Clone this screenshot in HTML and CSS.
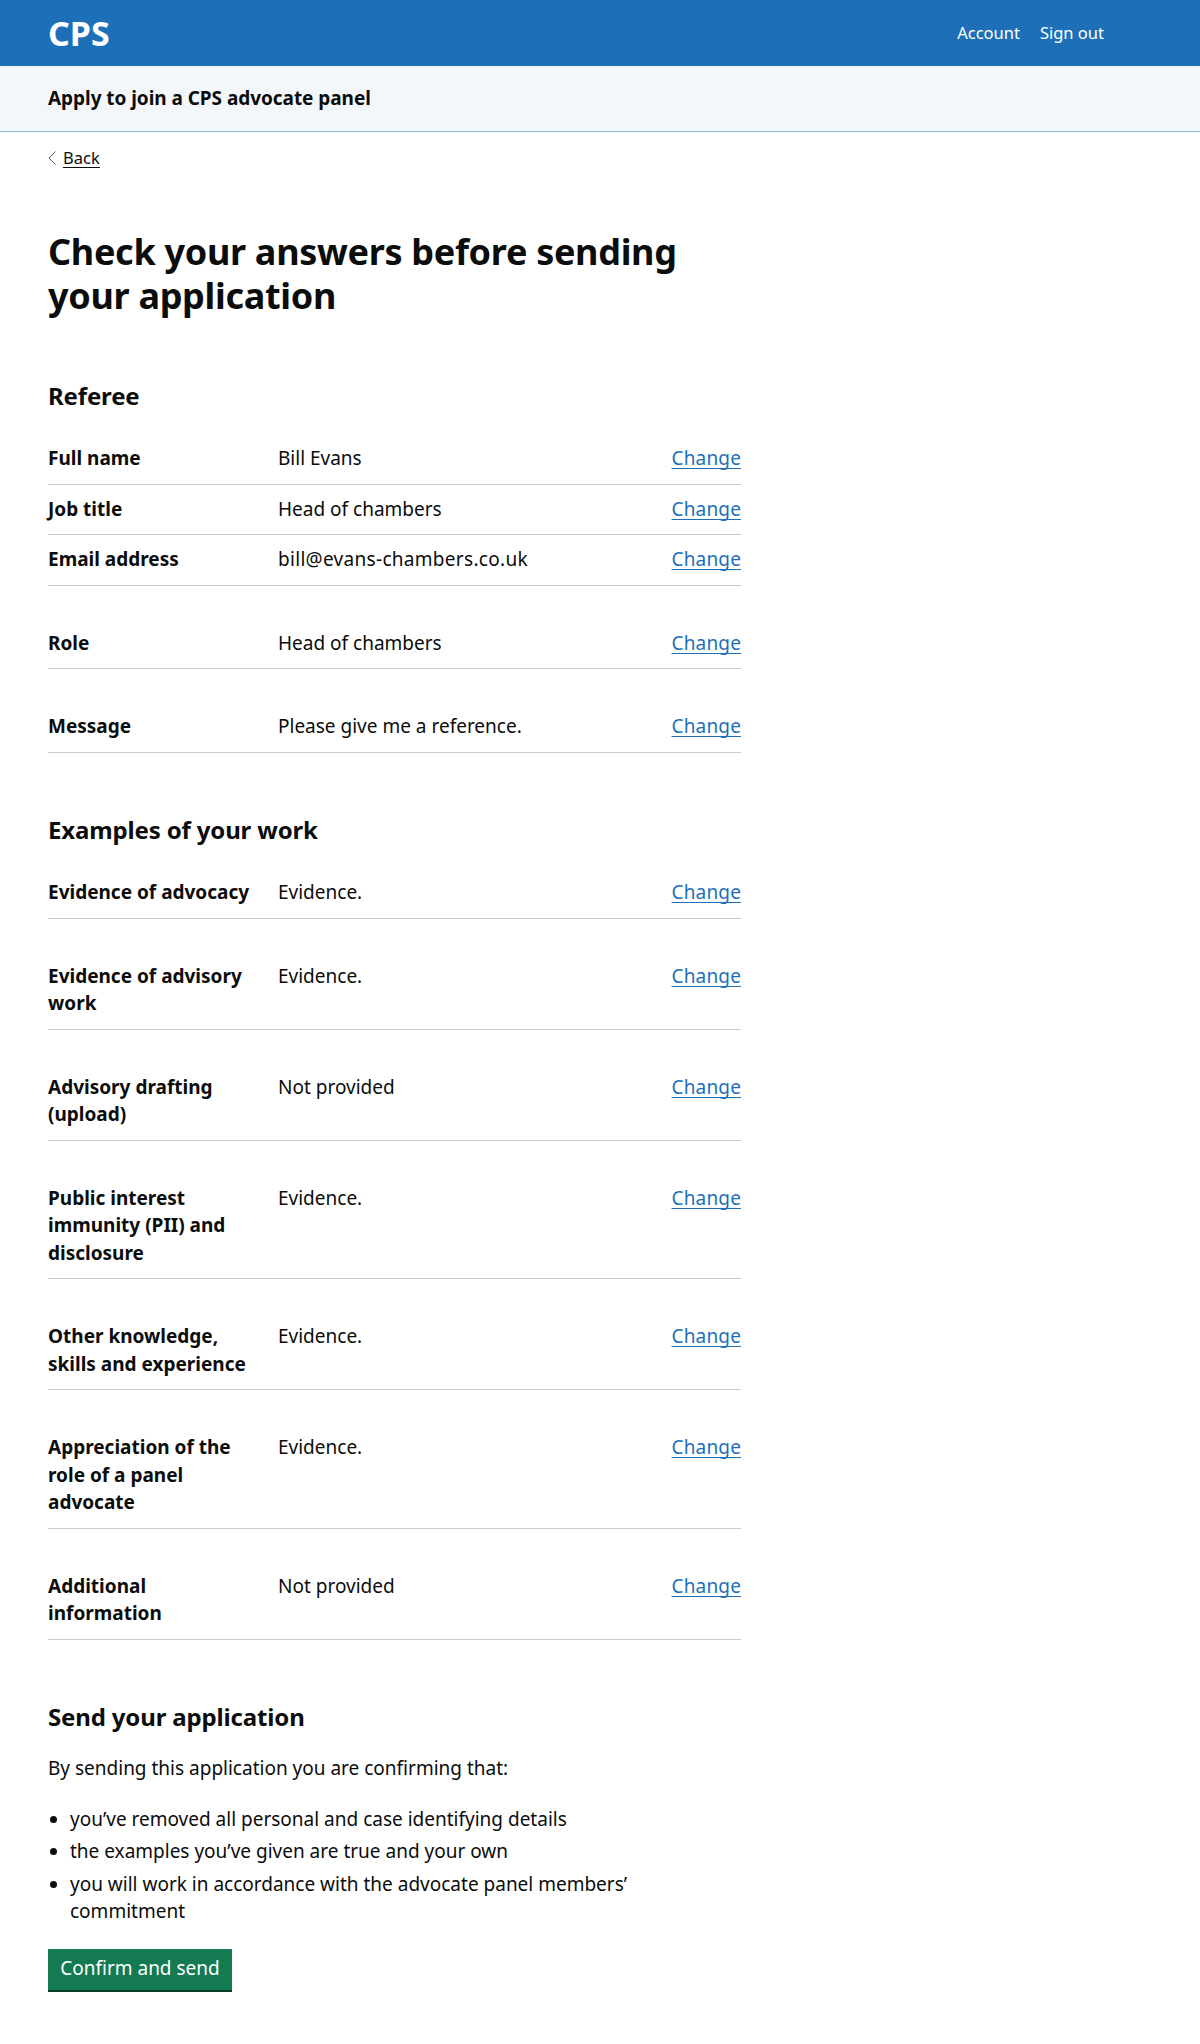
FILE: index.html
```html
<!DOCTYPE html>
<html lang="en">
<head>
<meta charset="utf-8">
<title>Check your answers</title>
<link rel="stylesheet" href="styles.css">
</head>
<body>
<header class="topbar">
  <a class="logo" href="#">CPS</a>
  <nav class="topnav"><a href="#">Account</a><a href="#">Sign out</a></nav>
</header>
<div class="service"><span>Apply to join a CPS advocate panel</span></div>
<main class="wrap">
  <a class="back" href="#"><svg width="8" height="14" viewBox="0 0 8 14"><path d="M7.5.5 1 7l6.500 6.500" fill="none" stroke="#505a5f" stroke-width="1"/></svg><span>Back</span></a>
  <h1>Check your answers before sending your application</h1>
  <h2>Referee</h2>
  <dl class="list mb">
    <div class="row"><dt>Full name</dt><dd>Bill Evans</dd><a href="#">Change</a></div>
    <div class="row"><dt>Job title</dt><dd>Head of chambers</dd><a href="#">Change</a></div>
    <div class="row"><dt>Email address</dt><dd class="email">bill@evans-chambers.co.uk</dd><a href="#">Change</a></div>
  </dl>
  <dl class="list mb">
    <div class="row"><dt>Role</dt><dd>Head of chambers</dd><a href="#">Change</a></div>
  </dl>
  <dl class="list">
    <div class="row"><dt>Message</dt><dd>Please give me a reference.</dd><a href="#">Change</a></div>
  </dl>
  <h2>Examples of your work</h2>
  <dl class="list">
    <div class="row gap"><dt>Evidence of advocacy</dt><dd>Evidence.</dd><a href="#">Change</a></div>
    <div class="row gap"><dt>Evidence of advisory work</dt><dd>Evidence.</dd><a href="#">Change</a></div>
    <div class="row gap"><dt>Advisory drafting (upload)</dt><dd>Not provided</dd><a href="#">Change</a></div>
    <div class="row gap"><dt>Public interest immunity (PII) and disclosure</dt><dd>Evidence.</dd><a href="#">Change</a></div>
    <div class="row gap"><dt>Other knowledge, skills and experience</dt><dd>Evidence.</dd><a href="#">Change</a></div>
    <div class="row gap"><dt>Appreciation of the role of a panel advocate</dt><dd>Evidence.</dd><a href="#">Change</a></div>
    <div class="row gap"><dt>Additional information</dt><dd>Not provided</dd><a href="#">Change</a></div>
  </dl>
  <h2>Send your application</h2>
  <p>By sending this application you are confirming that:</p>
  <ul>
    <li>you’ve removed all personal and case identifying details</li>
    <li>the examples you’ve given are true and your own</li>
    <li>you will work in accordance with the advocate panel members’ commitment</li>
  </ul>
  <button class="btn">Confirm and send</button>
</main>
</body>
</html>
```
FILE: styles.css
```css
* { box-sizing: border-box; }
html, body { margin: 0; padding: 0; }
body { font-family: "Noto Sans", sans-serif; color: #0b0c0c; font-size: 19px; line-height: 27.5px; background: #fff; }
a { text-decoration-thickness: 1px; text-underline-offset: 3px; text-decoration-skip-ink: none; }
.topbar { height: 66px; background: #1d70b8; display: flex; justify-content: space-between; align-items: center; padding: 0 96px 0 48px; }
.logo { color: #fff; font-size: 34px; line-height: 40px; font-weight: 700; text-decoration: none; }
.topnav { display: flex; gap: 20px; }
.topnav a { color: #fff; font-size: 16.5px; text-decoration: none; }
.service { height: 66px; background: #f3f7fa; border-bottom: 1px solid #8eb8dc; padding: 0 48px; display: flex; align-items: center; font-weight: 700; font-size: 19px; letter-spacing: -0.05px; }
.wrap { width: 741px; padding-left: 48px; }
.back { display: inline-flex; align-items: center; gap: 7px; margin-top: 16px; color: #0b0c0c; font-size: 16.5px; line-height: 20px; }
.back span { text-decoration: underline; text-decoration-thickness: 1px; text-underline-offset: 3px; }
h1 { margin: 57px 0 0; font-size: 36px; line-height: 44.5px; font-weight: 700; width: 640px; letter-spacing: -0.3px; }
h2 { margin: 62.5px 0 0; font-size: 24px; line-height: 30px; font-weight: 700; letter-spacing: -0.15px; }
.list { margin: 23px 0 0; }
.mb { margin-bottom: 33px; }
.mb + .list { margin-top: 0; }
.row { display: flex; border-bottom: 1px solid #ccc; padding: 11px 0; }
dt { width: 230px; flex: none; font-weight: 700; padding-right: 20px; }
dd { margin: 0; flex: 1; }
.email { letter-spacing: 0.3px; }
.row a { color: #1d70b8; letter-spacing: 0.15px; }
.gap + .gap { margin-top: 33px; }
p { margin: 23px 0; }
ul { margin: 0 0 23px; padding: 0 0 0 22px; width: 620px; }
li { margin-bottom: 5px; }
.btn { background: #137a52; color: #fff; border: 0; border-bottom: 2px solid #0f3d2b; font: inherit; height: 43px; width: 184px; padding: 0; display: block; }
```
